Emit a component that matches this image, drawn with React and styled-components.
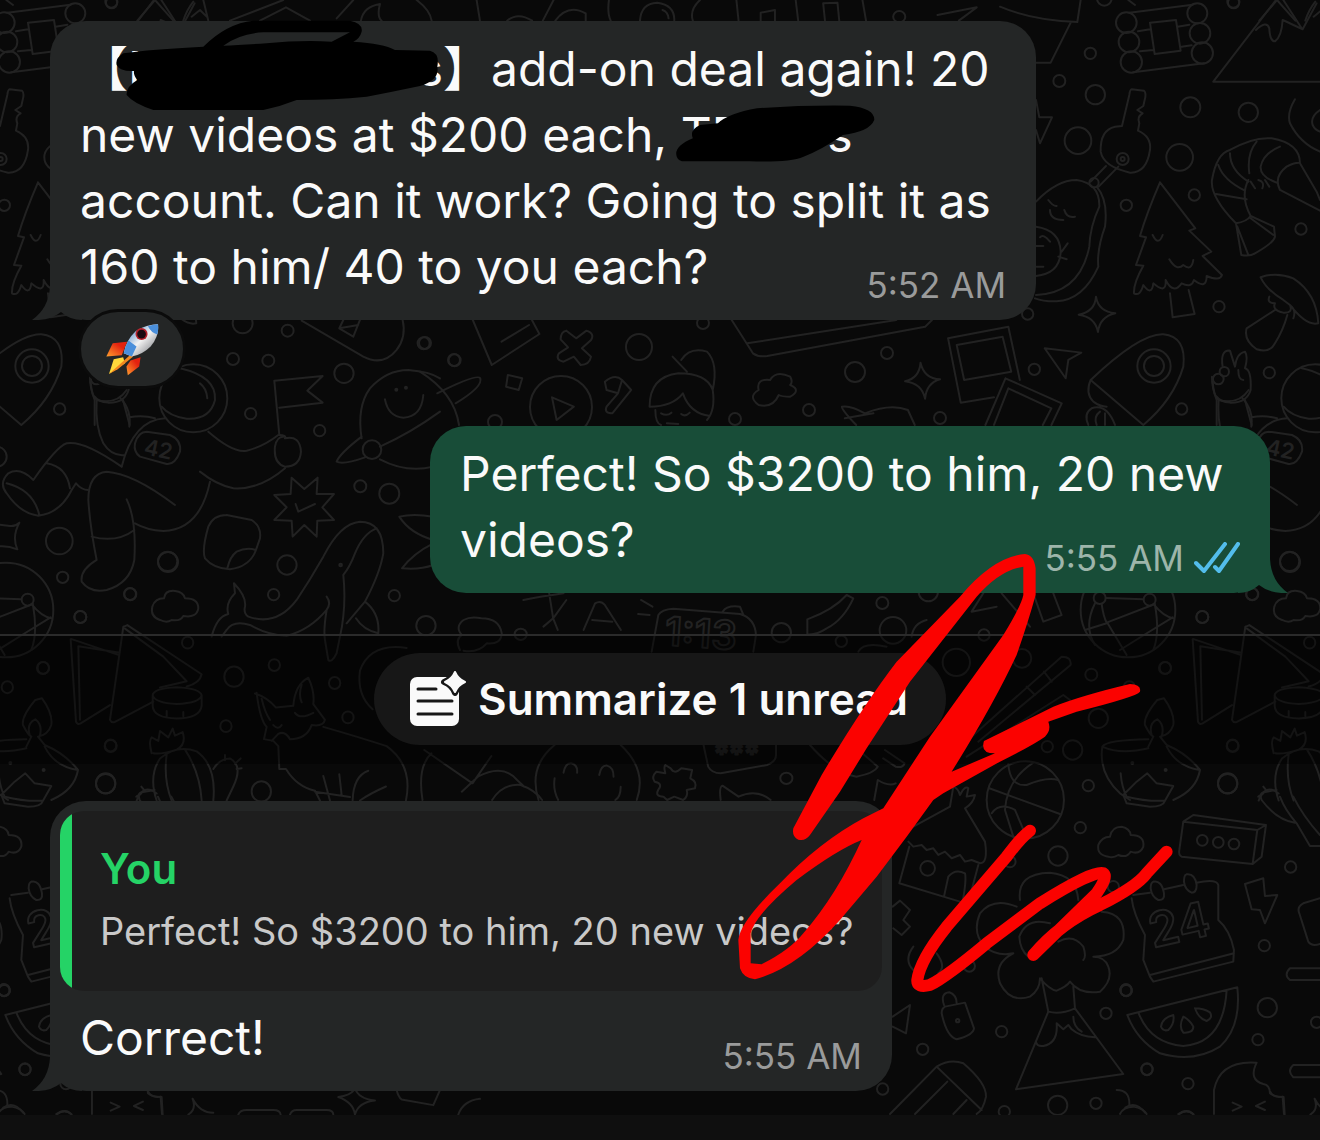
import React from 'react';
import styled, { createGlobalStyle } from 'styled-components';

const GlobalStyle = createGlobalStyle`
    body{
        margin:0;
        background:#090909;
        font-family:Inter, "Noto Sans CJK SC", "Liberation Sans", sans-serif;
    }
`;
const Page = styled.div`
    position:relative;
    overflow:hidden;
    min-height:100vh;
    display:flex;
    flex-direction:column;
    color:#fafafa;
`;
const Wallpaper = styled.svg`
    position:absolute;
    inset:0;
    width:100%;
    height:100%;
    fill:none;
    stroke:#222222;
    stroke-width:2;
    stroke-linecap:round;
    stroke-linejoin:round;
    path,circle{vector-effect:non-scaling-stroke;}
    text{font-weight:600;}
`;
const Thread = styled.main`
    position:relative;
    flex:1;
    display:flex;
    flex-direction:column;
    align-items:flex-start;
    padding:21px 0 24px;
`;
const Bubble = styled.article`
    position:relative;
    box-sizing:border-box;
    width:${p => p.$width}px;
    max-width:calc(100% - 100px);
    margin:0 50px ${p => p.$after || 0}px;
    align-self:${p => p.$mine ? 'flex-end' : 'flex-start'};
    padding:${p => p.$quoted ? 10 : 15}px 30px 20px;
    background:${p => p.$mine ? '#184d38' : '#242626'};
    border-radius:36px;
`;
const Tail = styled.svg`
    position:absolute;
    bottom:0;
    width:50px;
    height:60px;
    ${p => p.$mine ? 'right:-18px;' : 'left:-18px;transform:scaleX(-1);'}
    fill:${p => p.$mine ? '#184d38' : '#242626'};
`;
const Message = styled.p`
    margin:0;
    font-size:48px;
    line-height:66px;
    white-space:pre-line;
`;
const Hidden = styled.span`
    display:inline-flex;
    justify-content:space-between;
    width:${p => p.$width}px;
`;
const Meta = styled.div`
    position:absolute;
    right:30px;
    bottom:13px;
    display:flex;
    align-items:center;
    gap:10px;
    font-size:35px;
    line-height:44px;
    color:${p => p.$mine ? '#9db5aa' : '#9a9b9b'};
`;
const Reaction = styled.button`
    position:absolute;
    left:28px;
    bottom:-69px;
    display:flex;
    align-items:center;
    justify-content:center;
    width:108px;
    height:80px;
    padding:0;
    background:#242626;
    border:3px solid #0b0b0b;
    border-radius:40px;
`;
const UnreadBand = styled.section`
    box-sizing:border-box;
    width:100%;
    height:130px;
    margin-bottom:37px;
    padding-top:17px;
    display:flex;
    justify-content:center;
    align-items:flex-start;
    border-top:2px solid #2b2b2b;
    background:rgba(0,0,0,0.4);
`;
const SummarizeButton = styled.button`
    display:flex;
    align-items:center;
    gap:12px;
    height:92px;
    padding:0 38px 0 36px;
    border:0;
    border-radius:46px;
    background:#171717;
    color:#fafafa;
    font:600 44px/52px Inter, "Liberation Sans", sans-serif;
`;
const Quote = styled.blockquote`
    box-sizing:border-box;
    height:180px;
    margin:0 -20px 14px;
    padding:32px 20px 0 40px;
    overflow:hidden;
    border-radius:24px;
    background:linear-gradient(to right, #25d366 12px, #1e1e1e 12px);
`;
const Author = styled.div`
    font-size:42px;
    font-weight:600;
    line-height:52px;
    color:#25d366;
`;
const Quoted = styled.div`
    margin-top:10px;
    font-size:38px;
    line-height:52px;
    color:#c9c9c9;
    white-space:nowrap;
`;
const Composer = styled.footer`
    position:relative;
    height:26px;
    background:#0f0f0f;
`;
const Markup = styled.svg`
    position:absolute;
    left:0;
    top:0;
    width:1320px;
    height:1140px;
    pointer-events:none;
`;

// every sheet keeps its own grid: t places it, p are outlines, c are [x, y, r]
const SHEETS = [
    {
        t: 'scale(0.3333)',
        c: [[335, 8, 17], [728, 970, 30], [863, 992, 18], [1271, 1030, 18], [1364, 1081, 18]],
        p: [
            'M412 62L465 0L520 62M550 62Q560 30 580 5M575 50L600 30L620 50M610 0L625 62M690 62L850 0M780 62L858 22L930 62M1010 55L1060 0M1083 62Q1090 20 1140 12Q1130 50 1145 62M1250 0Q1290 30 1295 62M1430 0L1440 62',
            'M905 962L1090 1070Q1150 1100 1190 1050Q1220 1010 1208 960M1030 960L1018 985L1060 1010L1080 960M1018 985L1075 975',
        ],
    },
    {
        t: 'translate(500 0) scale(0.3571 0.3333)',
        c: [[1118, 50, 17]],
        p: ['M20 62Q50 35 90 62M120 62L150 0M155 62Q190 10 240 40L240 62M305 0Q300 40 310 62M392 62Q395 10 440 8Q490 15 488 62M455 30Q470 35 472 55M560 0Q530 30 540 62M662 0L668 62M730 62V38L770 30V62M828 0L835 62M910 62L905 10L945 8L950 62M1015 0L1025 62M1225 45L1335 22L1285 62'],
    },
    {
        t: 'translate(1000 0) scale(0.3333)',
        c: [[271, 160, 17], [178, 243, 18], [286, 284, 29], [234, 422, 40], [571, 322, 30], [745, 337, 29], [539, 472, 40], [583, 585, 17], [379, 616, 17], [903, 687, 17], [657, 920, 17], [83, 942, 17], [103, 1108, 17], [545, 1227, 17], [808, 1118, 17], [379, 68, 31], [387, 126, 31], [394, 186, 32], [592, 40, 30], [600, 100, 31], [607, 159, 32], [313, -5, 22], [700, 5, 18], [368, 477, 18], [368, 477, 6], [282, 548, 14], [462, 1098, 50], [462, 1098, 30], [655, 1137, 16], [673, 1115, 14]],
        p: [
            'M0 20Q100 62 232 66L242 0M212 68L152 188H108',
            'M388 38L578 14M414 94L450 88M533 80L568 74M420 154L460 150M545 140L575 136M400 217L612 190M450 68L528 60L542 152L464 162ZM385 0L405 15',
            'M640 245L828 0M640 245H960M768 90Q800 60 808 85Q810 125 825 124Q845 110 848 60Q870 70 908 88L950 10M850 0L905 85',
            'M395 268L432 272Q440 280 434 300L430 318L412 330L428 340Q410 350 418 370L414 392Q455 410 450 450Q440 520 390 518Q310 500 302 455Q300 390 345 380L366 378L388 285Q390 268 395 268M318 498L272 545M355 500L296 560',
            'M108 300L118 352L156 352L120 430L108 390',
            'M108 605Q170 540 230 540Q300 550 298 620Q270 680 268 740Q240 880 108 885M290 560Q325 600 315 680Q290 750 295 800Q250 900 170 904Q130 905 105 895M108 680Q180 690 182 755Q180 820 108 828M145 600Q160 620 170 618M150 630Q150 660 190 660M193 630Q200 655 225 650M185 755L203 730M175 770L200 778M120 712Q130 700 150 725M108 738H130M110 800H130',
            'M480 547L586 685L568 692L634 755L608 768L666 825Q660 845 620 828Q620 870 582 840Q575 865 545 850Q520 885 497 840Q500 885 460 850Q455 890 430 855Q420 890 402 880Q400 850 430 797L408 795L438 712L420 708Q440 640 480 547M510 880L518 952L584 942L566 870M458 705Q475 740 488 705M508 778Q530 815 550 795Q575 815 580 780',
            'M885 298Q860 340 870 370Q900 430 960 455M960 330Q930 350 938 375Q945 390 960 395M708 670Q630 590 636 540Q650 460 690 450Q760 410 815 415Q900 430 900 490L950 575L960 600M960 632L840 570Q820 530 860 500Q880 488 897 488M840 440Q790 460 782 500Q780 530 830 548M770 425Q740 460 748 520M690 460Q690 510 745 545M655 495Q670 540 735 572M648 582L740 598M745 540Q720 590 752 648Q740 665 708 670L724 765Q750 770 765 760Q820 730 825 710L822 680L752 648M712 680L745 765M752 655L820 705M752 545L765 565M775 540Q795 545 787 565M795 540L808 560',
            'M782 832Q830 815 880 835Q950 880 955 970Q920 980 870 915L850 900Q800 870 782 832M808 890Q800 910 825 910Q815 930 850 938Q880 940 870 915Q890 930 880 955M825 930L740 985Q730 1020 770 1048Q810 1060 825 1030Q850 990 862 945',
            'M288 890Q295 935 346 940Q300 950 294 996Q285 950 236 944Q285 935 288 890Z',
            'M134 1045L244 1058L205 1080L197 1135Z',
            'M272 1140Q420 1000 490 1003Q560 1010 550 1100Q520 1200 430 1275L272 1140Q255 1180 280 1205Q300 1220 320 1220M265 1275Q250 1240 275 1225Q320 1210 345 1275M290 1275Q280 1250 300 1235M315 1275V1240',
            'M650 1275V1200Q635 1160 636 1130M668 1100Q660 1050 690 1052L705 1100Q710 1060 735 1055Q745 1070 735 1105Q755 1110 752 1170Q740 1210 690 1208Q660 1205 650 1190M735 1200L755 1275M715 1110Q715 1140 730 1140',
        ],
    },
    {
        t: 'translate(0 340) scale(0.3333)',
        c: [[699, 57, 18], [805, 62, 18], [1032, 100, 29], [752, 221, 17], [959, 272, 17], [1081, 439, 18], [1168, 461, 30], [178, 603, 40], [503, 664, 29], [188, 712, 17], [391, 763, 18], [241, 831, 18], [821, 764, 17], [861, 675, 29], [1183, 767, 17], [1278, 857, 29], [-10, 350, 30], [1116, 329, 28], [580, 175, 102], [1189, 149, 3], [1218, 143, 3], [1022, 675, 4]],
        p: [
            'M540 85Q650 110 645 180Q630 240 560 236Q510 230 485 200M600 130Q620 145 622 175',
            'M272 125Q275 170 290 180Q285 260 310 310Q335 350 375 345M290 180Q350 195 380 150M362 175Q395 210 388 260M388 232Q430 225 465 235M365 380Q400 240 495 235',
            'M440 275L510 285Q545 300 540 335Q525 375 500 372L420 350Q400 335 405 310Q415 275 440 275',
            'M838 285L823 122L968 108L922 152L968 188L838 203',
            'M838 285Q860 285 855 295Q900 285 903 335Q900 380 855 380Q820 370 825 320Q830 290 850 290M625 275Q700 340 740 332Q790 320 835 285M855 385Q780 450 700 445Q650 435 600 395M630 425Q600 570 490 573Q440 570 405 550',
            'M365 380Q250 300 200 310Q170 320 100 420Q60 380 25 400Q-5 430 20 460Q60 520 115 527Q180 520 215 450L228 430Q245 450 265 450M140 370Q200 380 210 445M20 430Q100 450 118 525',
            'M525 495Q400 400 320 395Q265 400 265 480Q270 560 290 660Q240 690 245 725Q270 760 320 750Q390 730 403 660Q410 540 380 478M275 590Q350 610 403 570',
            'M-20 552L30 558Q45 560 58 548Q35 590 52 628Q20 615 -10 620',
            'M1085 295Q1070 200 1110 145Q1160 90 1225 90Q1290 95 1320 115M1140 320Q1230 280 1320 215M1085 290Q1020 340 1010 365Q1030 375 1095 352M1140 358Q1220 400 1300 380M1155 178Q1165 230 1210 233Q1265 230 1270 165',
            'M875 413L913 447L953 413L950 462L1002 462L967 502L1002 540L952 542L950 590L913 555L878 590L875 542L823 540L860 502L823 465L872 462ZM887 492L895 515L945 492',
            'M680 525L755 540Q785 560 780 595L768 630Q750 680 690 688Q640 685 615 655Q605 630 625 560Q640 525 680 525M682 685Q690 650 710 635Q740 620 768 630',
            'M635 890Q650 830 685 822Q675 790 705 760L702 730Q740 770 735 800Q730 820 745 830Q830 860 890 780Q930 720 970 650Q1020 550 1080 545Q1150 545 1150 640Q1140 700 1095 785L1040 850M1130 565Q1090 580 1065 640Q1050 680 1030 705Q1040 800 1020 890M980 770Q995 790 980 810Q930 870 860 888Q800 885 750 855Q700 840 680 870L665 890M980 810Q970 870 975 900L985 960Q995 970 1010 940L1020 890M1095 785Q1140 820 1135 880Q1090 870 1068 835',
            'M480 840Q450 830 457 800Q465 775 492 775Q495 750 525 753Q550 755 555 775Q595 775 595 805Q590 835 550 828Q540 845 515 840Q500 850 480 840',
            'M1300 530Q1240 520 1198 530Q1230 580 1300 600M1300 610Q1240 640 1206 685Q1260 690 1300 675',
        ],
    },
    {
        t: 'translate(420 310) scale(0.574 0.3333)',
        c: [],
        p: [
            'M0 185Q60 250 68 345M30 250Q100 190 105 205Q110 230 62 280',
            'M92 30L125 165L208 72L195 30M142 95L190 45',
            'M255 62L272 85L290 62Q305 70 298 90L282 115L298 140Q295 165 280 165L268 140L250 155Q235 150 242 130L258 112L245 88Q245 65 255 62',
            'M543 30L580 130Q590 142 605 138L880 50L892 30M570 100L830 30',
            'M153 195L178 205L172 240L150 230ZM230 262L268 290L238 330Z',
            'M322 215Q340 190 352 210L368 240L335 310Q320 310 325 290L345 250L325 240ZM345 250L352 210',
            'M400 290Q400 200 450 190Q500 190 510 240Q515 300 500 330M440 140L465 185M455 150Q470 110 500 125Q520 160 510 240M400 290Q440 290 458 250Q470 310 505 318M410 300Q410 340 420 345M420 310Q430 320 438 308M455 312Q462 322 470 308M430 340L450 342',
            'M590 285Q570 260 590 240Q585 205 610 210Q620 180 645 200Q650 215 645 225Q665 240 645 260Q630 260 625 255Q615 295 590 285',
            'M760 345Q735 300 735 290Q750 285 775 310Q820 280 850 300L862 345M740 325L790 310',
            'M872 158Q878 205 906 208Q882 220 880 266Q874 220 845 214Q870 205 872 158Z',
            'M920 85L1025 50L1045 210M920 85L942 278L1000 262M935 105L1015 80L1030 185L948 210ZM1020 205L1118 280L1100 345M1020 205L985 345M1025 235L1100 295L1085 345M1025 235L1000 345',
            'M180 870Q210 860 250 850M225 850L232 925L215 950M232 925L255 870M232 925L240 960M285 960L305 880Q315 870 322 885L350 960M300 930L335 935M385 870L405 890M380 912L400 915',
        ],
    },
    {
        t: '',
        c: [[425, 343, 6], [454, 360, 6], [703, 323, 6], [639, 347, 13], [855, 372, 10], [887, 353, 6], [809, 410, 6], [735, 419, 6], [940, 418, 6], [495, 422, 7], [561, 407, 31], [1290, 562, 10], [1252, 594, 6]],
        p: [],
    },
    {
        t: 'translate(0 590) scale(0.3333 0.3509)',
        c: [[130, 222, 17], [22, 277, 17], [563, 150, 17], [702, 247, 29], [823, 214, 17], [1004, 265, 17], [1044, 363, 17], [678, 388, 17], [332, 443, 17], [317, 551, 29], [784, 574, 29], [75, 1366, 17], [12, 1140, 17]],
        p: [
            'M212 140L228 375Q232 385 242 380L330 328M215 140L355 185M235 160L355 178M235 160L240 370M370 105L330 370Q335 380 345 376L460 318M370 105L382 100L605 240Q600 265 560 275M375 110L490 190L560 260L480 278',
            'M458 300Q460 280 530 277Q600 280 605 300Q600 322 530 325Q465 322 458 300V330Q460 365 530 366Q600 365 605 330V300M500 345V360M550 348V360',
            'M835 445L838 510L858 510Q890 560 945 572M770 293Q780 370 800 390L792 425L820 430L835 445M765 295Q800 305 828 335L880 330Q885 270 925 250Q945 290 940 325L975 370Q970 390 935 385Q920 425 870 425Q855 400 835 410L815 430M785 310Q795 350 810 370M905 270Q895 300 905 320M885 350Q900 370 940 350M820 385Q835 400 845 385M970 390Q1080 420 1160 445Q1240 500 1218 600M945 572L960 600M970 530L990 600M1018 525L1025 585M1105 515Q1060 530 1058 600M1158 560Q1110 580 1080 600M945 575L1050 590',
            'M455 465Q445 430 455 420L475 430L480 402L505 420L518 395L525 415L548 405Q560 440 530 455Q480 470 460 465M470 600Q445 530 480 480Q530 440 590 460Q650 500 640 600M500 470Q490 540 515 600M555 455Q600 520 605 600M640 510Q660 480 690 480Q730 500 700 560L680 600M410 600Q430 550 470 580M675 485V470M705 495L722 480M710 510L725 508',
            'M1118 340Q1070 300 1080 230Q1110 150 1220 165',
            'M445 1430Q450 1445 485 1445L488 1495M565 1495Q590 1480 578 1450Q600 1490 640 1490M715 1495Q720 1482 740 1482H820Q840 1482 842 1495M870 1495Q875 1482 890 1482H980Q1000 1482 1000 1495M1190 1425Q1195 1445 1205 1452L1300 1468L1320 1425M1375 1495Q1390 1455 1440 1450M1065 1420Q1075 1450 1125 1455Q1075 1460 1065 1495Q1060 1460 1015 1445Q1050 1440 1062 1425M10 1475Q40 1455 70 1490M170 1495Q195 1475 215 1495',
        ],
    },
    {
        t: 'translate(360 620) scale(0.3571 0.3333)',
        c: [[450, 43, 17], [1194, 475, 17]],
        p: [
            'M280 90Q265 60 285 45Q265 20 290 0Q310 -12 340 -5Q390 -5 397 40Q395 75 355 70Q330 100 290 92',
            'M180 390L315 490L368 408M285 515L330 470M175 540Q160 440 200 400M330 470Q400 430 440 480L460 500M370 540Q400 490 450 495Q490 510 510 540',
            'M500 540Q470 440 545 375M730 375Q805 450 775 540M570 458Q575 428 592 430Q610 435 608 458M670 465Q675 435 692 437Q710 442 710 470M545 475Q540 510 555 540M730 500Q730 530 715 540',
            'M855 435L870 445Q880 465 900 445L930 450L925 475Q945 485 938 505L915 510Q920 530 905 540L880 530L860 540L850 530Q825 530 835 510Q850 490 825 485Q815 470 830 455L855 460Q850 440 855 435',
            'M962 375L975 440Q985 460 1010 460L1140 435Q1165 425 1165 405V375',
            'M1010 540Q1005 500 1015 497L1060 530Q1110 505 1150 540M1260 375Q1330 460 1390 470Q1440 460 1450 440L1380 375M1470 390L1525 430Q1520 445 1500 440L1465 415M1440 540L1450 480Q1480 500 1500 490',
        ],
    },
    {
        t: 'translate(700 540) scale(0.3333)',
        c: [[547, 189, 18], [685, 155, 29], [244, 278, 29], [424, 304, 17], [579, 271, 40], [852, 285, 17], [769, 367, 41], [966, 355, 28], [1174, 404, 18], [1195, 535, 29], [1118, 630, 29], [1042, 620, 17], [1165, 737, 17], [1141, 863, 17], [1074, 948, 29], [976, 780, 116], [683, 985, 22], [930, 965, 17], [1278, 1351, 17]],
        p: [
            'M322 238Q400 210 440 165L460 175Q430 240 380 265Q350 285 322 283Z',
            'M-145 335L-125 225Q-115 208 -80 206L120 222Q165 235 168 285L160 335M68 215Q80 195 120 200L130 225',
            'M635 290Q640 250 680 240M475 335Q490 305 560 320',
            'M815 215L850 160M815 215L890 200M1000 160L1030 245L1085 225L1060 160M905 160L990 260',
            'M815 590L1085 350Q1115 350 1112 375L835 605M1032 395L1055 425M980 440L1005 465M800 650L1090 465L1110 480',
            'M640 860L750 800L760 740Q775 745 780 765Q795 735 805 745L800 770L825 765Q820 790 795 805L855 905Q865 970 840 970L815 960L795 965L780 945L755 955L735 935L715 945L700 925L680 930L665 915L640 920L625 905M628 920L598 1030L780 1085M835 975L815 1050M732 1070L745 1010Q765 985 795 1000Q800 1020 788 1085',
            'M925 672Q930 740 980 735Q1040 710 1075 720M1000 668Q920 720 915 810L940 890M868 745L1080 822M875 820Q900 785 945 810L975 880',
            'M578 1100L600 1082L630 1110L610 1140L630 1160L605 1185L580 1165',
        ],
    },
    {
        t: 'translate(860 760) scale(0.3333)',
        c: [[188, 868, 17], [425, 815, 17], [68, 987, 17], [593, 1036, 29], [708, 1030, 17], [433, 1055, 17], [861, 928, 17], [984, 971, 17], [799, 692, 17], [738, 760, 17], [1222, 743, 29], [1370, 787, 17], [1213, 557, 17], [1292, 321, 17], [1194, 839, 17], [1103, 71, 29], [328, 618, 17], [1027, 241, 16], [1075, 247, 16], [1122, 252, 16], [293, 782, 5], [760, 380, 17]],
        p: [
            'M480 420Q470 340 570 338Q650 345 655 420M470 440Q400 410 360 460Q335 520 375 560Q410 590 460 580Q400 610 420 670Q450 730 510 710Q540 690 540 655Q570 690 590 692Q620 680 630 665Q660 705 720 695Q760 660 745 620Q735 590 700 590Q770 590 790 540Q800 460 725 455M570 490Q500 470 478 530Q480 570 505 590M595 545Q640 520 670 560Q680 590 670 600M545 655L565 755M640 680L645 745',
            'M565 755Q600 765 645 745L790 942L468 988ZM528 845Q530 860 550 858Q595 850 590 790L610 808L625 795L635 808Q660 830 705 832M640 770Q640 800 665 815',
            'M255 740L315 728L342 805Q340 825 290 838Q260 830 245 760Q245 745 255 740M252 735Q240 700 268 697Q290 705 290 730',
            'M160 560Q130 600 160 630M230 580Q260 620 235 640M98 770L150 735L138 820L98 800',
            'M90 1062L230 920Q270 895 310 910Q380 970 378 1010Q370 1050 350 1062M230 920L365 1050M165 1062L262 965M280 1062L320 1020',
            'M745 290Q710 285 715 255Q725 230 750 230Q755 200 785 200Q810 205 812 225Q855 225 850 260Q840 285 812 275Q800 295 775 285Q760 295 745 290',
            'M970 185L1192 210L1178 312L965 290Q955 285 958 270ZM970 185L1000 165L1218 195L1192 210M1218 195L1205 290L1178 312',
            'M820 405L870 398M912 388L970 375M1010 368Q1070 355 1075 375L1075 480Q1110 510 1122 570L1120 605L880 665L870 650L850 600L855 525Q820 460 815 415M870 645L1122 580',
            'M880 365Q905 360 912 400Q915 422 895 420Q875 410 872 385Q872 368 880 365M980 343Q1005 340 1010 375Q1010 398 995 398Q975 390 972 365Q972 345 980 343',
            'M1155 372L1210 355L1215 408L1252 405L1215 490L1200 450L1175 448Z',
            'M802 765L1132 682Q1145 800 1080 860Q1000 910 900 880Q830 840 802 765M835 757Q870 850 970 858Q1090 850 1100 692M940 765Q905 775 903 800Q910 815 925 810Q945 790 940 765M970 770Q955 800 970 818Q1000 820 1000 800Q990 780 970 770M1005 745Q1015 775 1040 783Q1060 775 1050 757Q1030 745 1005 745',
            'M1062 1062V990Q1080 900 1190 908Q1165 960 1210 972Q1230 975 1230 1000Q1250 1015 1268 1010L1272 1062M1118 1028L1145 1040L1118 1052M1215 1025L1188 1038L1215 1050',
            'M1380 625H1290Q1270 645 1290 660H1380M1380 915H1300Q1280 933 1300 952H1380M1380 415L1330 430Q1310 440 1318 460L1345 545Q1355 560 1380 552M770 990Q810 990 808 1035M780 1062Q790 1040 820 1040Q850 1045 860 1062M955 1062Q980 1045 1000 1062',
            'M1380 258L1350 258L1310 190Q1275 150 1260 110M1300 110Q1330 170 1380 225M1305 188Q1250 180 1205 120Q1195 95 1220 95L1250 90M1195 110L1210 100M1210 80L1220 92',
            'M782 40Q785 80 800 110M800 110Q860 125 915 122M790 105L800 130L870 140Q910 140 915 122L940 78L890 70L862 40L830 65Z',
        ],
    },
    {
        t: 'translate(1020 400) scale(0.3333)',
        c: [[324, 630, 142], [239, 594, 18], [389, 599, 18], [547, 651, 18], [435, 804, 18], [638, 1038, 18], [337, 1089, 3], [437, 1110, 3]],
        p: [
            'M225 610Q190 680 225 735M258 594L370 598M245 612Q250 650 260 668L405 612M262 668L320 765M400 612Q430 650 460 655M260 670L195 690M300 750L372 705L458 652M405 615Q420 700 400 750',
            'M412 900Q370 950 375 975Q390 1005 400 1010L385 1040M412 900L432 895Q465 940 460 975Q450 1005 420 1010L440 1035Q500 1060 540 1110Q530 1170 460 1200M395 1005Q385 970 412 958Q435 975 425 1010M385 1018Q260 1020 247 1040Q300 1065 385 1045M247 1040Q235 1120 300 1180L330 1200M440 1040Q470 1100 540 1110',
        ],
    },
];

function Doodles() {
    return (
        <Wallpaper aria-hidden="true">
            <defs>
                <g id="doodles">
                    {SHEETS.map((s, i) => (
                        <g key={i} transform={s.t}>
                            {s.p.map((d, j) => <path key={j} d={d} />)}
                            {s.c.map(([x, y, r], j) => <circle key={j} cx={x} cy={y} r={r} />)}
                        </g>
                    ))}
                    <text x="143" y="454" fontSize="22" transform="rotate(12 143 454)" fill="#222222" stroke="none">42</text>
                    <text x="664" y="645" fontSize="40" transform="rotate(4 664 645)">1:13</text>
                    <text x="1153" y="948" fontSize="48" transform="rotate(-13 1153 948)">24</text>
                    <text x="714" y="764" fontSize="28">***</text>
                </g>
            </defs>
            <use href="#doodles" />
            <use href="#doodles" x="1122" />
            <use href="#doodles" x="-1122" />
        </Wallpaper>
    );
}

function BubbleTail({ mine }) {
    return (
        <Tail $mine={mine} viewBox="0 0 50 60" aria-hidden="true">
            <path d="M0 0H32V26Q33 48 50 60Q32 61 21 52Q12 60 0 60Z" />
        </Tail>
    );
}

function Rocket() {
    return (
        <svg width="53" height="53" viewBox="315 970 158 158" role="img" aria-label="rocket">
            <defs>
                <linearGradient id="hull" x1="0" y1="0" x2="1" y2="1">
                    <stop offset="0.2" stopColor="#6f9fd4" />
                    <stop offset="0.5" stopColor="#f2f2f2" />
                    <stop offset="0.85" stopColor="#8d8f94" />
                </linearGradient>
                <linearGradient id="fin" x1="1" y1="0" x2="0" y2="1">
                    <stop offset="0.3" stopColor="#e3220f" />
                    <stop offset="1" stopColor="#ffa02e" />
                </linearGradient>
            </defs>
            <path fill="url(#fin)" d="M335 1030L378 1026L362 1066L316 1070Z" />
            <path fill="url(#fin)" d="M388 1082L418 1072L414 1100L380 1126L376 1100Z" />
            <path fill="#ffd93b" d="M338 1078L366 1072L372 1090L324 1122Z" />
            <path fill="#f2881e" d="M324 1122L386 1066L396 1070L350 1108Z" />
            <path fill="url(#hull)" d="M470 974Q474 1010 448 1040Q424 1064 392 1070L368 1060Q374 1022 404 994Q436 974 470 974Z" />
            <path fill="#4a8fdb" d="M440 980Q456 974 470 974Q473 990 468 1004Q450 1000 440 980ZM368 1060Q372 1040 382 1022L406 1040L392 1070Z" />
            <circle cx="421" cy="1003" r="18" fill="#b3202a" />
            <circle cx="421" cy="1003" r="13" fill="#1b0a10" />
        </svg>
    );
}

function SummaryIcon() {
    return (
        <svg width="56" height="56" viewBox="0 0 56 56" aria-hidden="true">
            <rect x="0" y="6" width="49" height="49" rx="7" fill="#fafafa" />
            <path d="M8 18H26M8 30H42M8 43H42" stroke="#171717" strokeWidth="3" strokeLinecap="round" />
            <path d="M45 0Q48 8 56 11Q48 14 45 22Q42 14 34 11Q42 8 45 0Z" fill="#171717" stroke="#171717" strokeWidth="6" strokeLinejoin="round" />
            <path d="M45 1Q48 8 55 11Q48 14 45 21Q42 14 35 11Q42 8 45 1Z" fill="#fafafa" stroke="#fafafa" strokeWidth="2" strokeLinejoin="round" />
        </svg>
    );
}

function ReadTicks() {
    return (
        <svg width="46" height="32" viewBox="0 0 46 32" fill="none" stroke="#53bdeb" strokeWidth="4" strokeLinecap="round" strokeLinejoin="round" role="img" aria-label="Read">
            <path d="M2 21L10 29L31 2M21 25L25 29L44 2" />
        </svg>
    );
}

function Scribbles() {
    return (
        <Markup viewBox="0 0 1320 1140" aria-hidden="true">
            <g fillRule="evenodd">
                <path transform="scale(0.3333)" d="M350 195Q345 175 370 160Q450 148 610 140Q680 70 760 62H1050Q1090 70 1085 95Q1080 115 1060 125Q1150 130 1185 150L1290 152Q1320 160 1312 200Q1320 240 1260 258Q1180 275 1100 290Q1000 300 890 300Q840 320 790 330H460Q400 310 380 285Q378 260 412 240Q400 225 402 213Q360 215 350 195ZM670 137Q720 100 790 97H1050L995 125Q900 120 800 130Q720 135 670 137Z" />
                <path transform="translate(500 0) scale(0.3571 0.3333)" d="M495 470Q485 440 540 415Q530 390 560 375L610 370Q640 340 720 325Q850 315 980 317Q1050 325 1048 360Q1035 395 960 405Q900 450 850 470Q810 488 700 484H520Q500 485 495 470Z" />
            </g>
            <path transform="translate(730 545) scale(0.3333)" fill="#fb0200" fillRule="evenodd" d="M190 850L275 690Q400 480 500 350L690 155Q790 35 885 27Q912 30 917 70V150Q895 230 860 330Q790 480 665 680L795 625Q750 625 762 588L870 535L970 485Q1060 450 1200 417Q1235 418 1230 440Q1220 455 1040 500L955 530Q965 555 945 575Q910 600 810 650L640 745L610 765L530 875L440 995L330 1125Q200 1270 75 1303Q40 1300 30 1270L25 1185Q30 1130 150 1015Q270 890 400 820L460 790L600 575L820 270Q875 180 880 150V65Q810 75 740 155L540 410L410 610L330 740L240 870Q225 890 205 884Q185 875 190 850ZM395 885Q320 915 200 1005Q75 1110 62 1165V1255L95 1258Q180 1215 220 1165Q320 1050 395 885Z" />
            <path transform="translate(700 540) scale(0.3333)" fill="none" stroke="#fb0200" strokeWidth="36" strokeLinecap="round" strokeLinejoin="round" d="M990 872Q960 895 920 950L740 1160Q660 1260 652 1320Q650 1345 690 1335Q740 1310 860 1210L1020 1090Q1180 990 1210 1000Q1225 1010 1190 1060L1000 1245Q1080 1150 1200 1095Q1310 1040 1340 1000L1400 935" />
        </Markup>
    );
}

function App() {
    return (
        <>
        <GlobalStyle />
        <Page>
            <Doodles />
            <Thread>
                <Bubble $width={986} $after={106}>
                    <BubbleTail />
                    <Message>
                        【<Hidden $width={315}><span>N</span><span>s</span></Hidden>】add-on deal again! 20{'\n'}
                        new videos at $200 each, <Hidden $width={172}><span>TE</span><span>s</span></Hidden>{'\n'}
                        account. Can it work? Going to split it as{'\n'}
                        160 to him/ 40 to you each?
                    </Message>
                    <Meta><time>5:52 AM</time></Meta>
                    <Reaction type="button"><Rocket /></Reaction>
                </Bubble>
                <Bubble $width={840} $after={41} $mine>
                    <BubbleTail mine />
                    <Message>Perfect! So $3200 to him, 20 new{'\n'}videos?</Message>
                    <Meta $mine><time>5:55 AM</time><ReadTicks /></Meta>
                </Bubble>
                <UnreadBand>
                    <SummarizeButton type="button"><SummaryIcon />Summarize 1 unread</SummarizeButton>
                </UnreadBand>
                <Bubble $width={842} $quoted>
                    <BubbleTail />
                    <Quote>
                        <Author>You</Author>
                        <Quoted>Perfect! So $3200 to him, 20 new videos?</Quoted>
                    </Quote>
                    <Message>Correct!</Message>
                    <Meta><time>5:55 AM</time></Meta>
                </Bubble>
            </Thread>
            <Composer />
            <Scribbles />
        </Page>
        </>
    );
}
export default App;
